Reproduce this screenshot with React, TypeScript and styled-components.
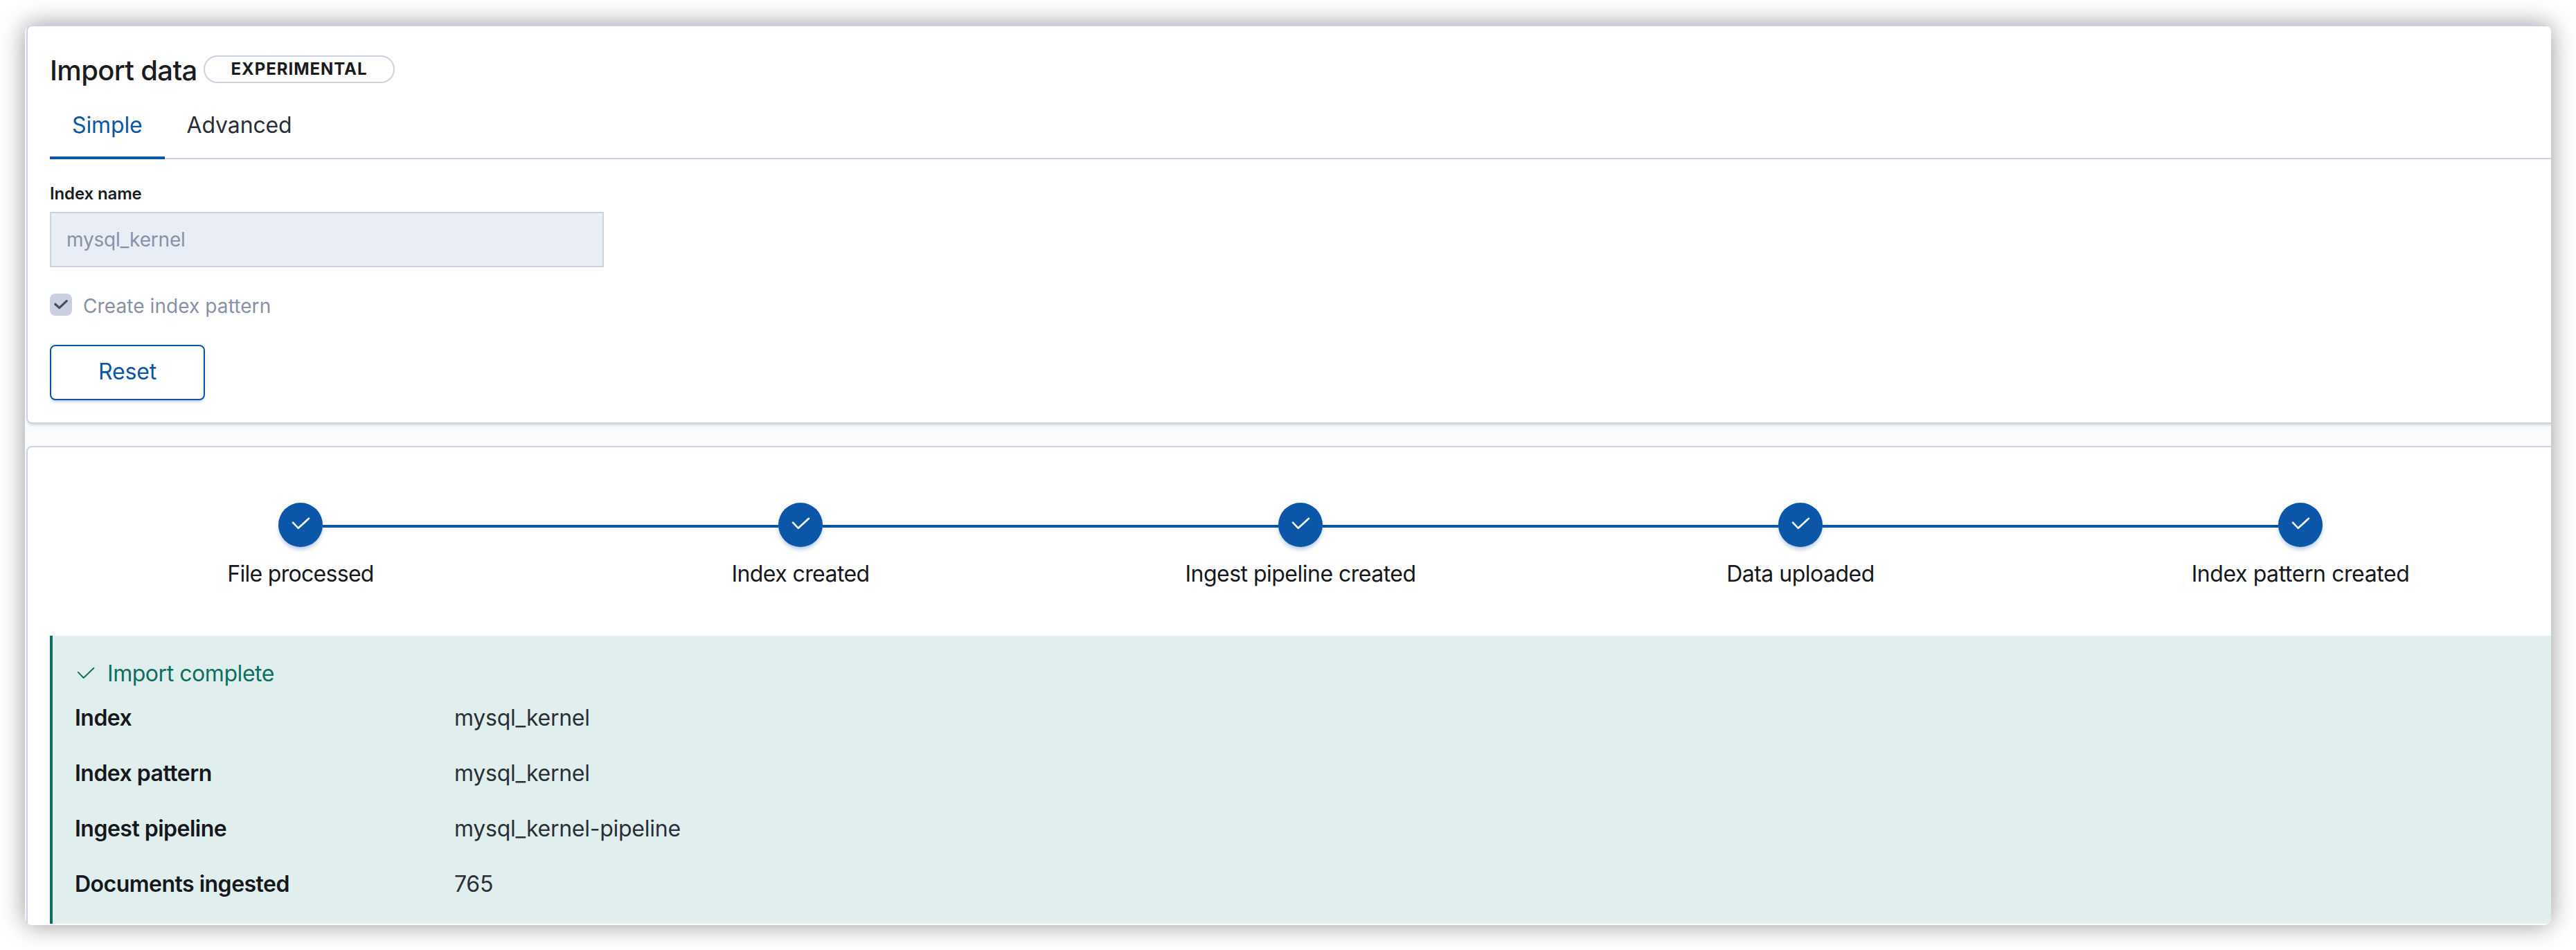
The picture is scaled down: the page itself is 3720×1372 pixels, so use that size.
import React from "react";
import styled, { createGlobalStyle } from "styled-components";

const GlobalStyle = createGlobalStyle`
  * { box-sizing: border-box; }
  body {
    margin: 0;
    background: #fff;
    font-family: Inter, "Liberation Sans", sans-serif;
    font-size: 32px;
    line-height: 48px;
    letter-spacing: -0.004em;
    color: #1a1c21;
  }
`;

const Stage = styled.div`
  height: 1372px;
  padding: 36px;
  overflow: hidden;
`;

const Shot = styled.main`
  width: 3648px;
  height: 1300px;
  padding-left: 2px;
  display: flex;
  flex-direction: column;
  gap: 32px;
  overflow: hidden;
  border-radius: 10px;
  background: #fafbfd;
  box-shadow: 0 0 36px rgba(0, 0, 0, 0.42);
`;

const Panel = styled.section<{ $height: number }>`
  flex: none;
  width: 3700px;
  height: ${(p) => p.$height}px;
  padding-left: 32px;
  border: 2px solid #cad3e2;
  border-radius: 8px;
  background: #fff;
  box-shadow: 0 4px 4px -2px rgba(152, 162, 179, 0.4);
`;

const Heading = styled.header`
  display: flex;
  align-items: flex-start;
  gap: 10px;
  padding-top: 34px;
  height: 96px;
`;

const Title = styled.h1`
  margin: 0;
  width: 212px;
  white-space: nowrap;
  font-size: 40px;
  font-weight: 500;
  line-height: 60px;
  letter-spacing: -0.016em;
`;

const Badge = styled.span`
  width: 276px;
  height: 40px;
  margin-top: 8px;
  border: 2px solid #cad3e2;
  border-radius: 20px;
  text-align: center;
  font-size: 24px;
  font-weight: 700;
  line-height: 36px;
  letter-spacing: 0.04em;
`;

const Tabs = styled.nav`
  display: flex;
  height: 96px;
  box-shadow: inset 0 -2px 0 #cad3e2;
`;

const Tab = styled.button<{ $active?: boolean }>`
  height: 96px;
  padding: 0 32px 3px;
  border: 0;
  background: none;
  box-shadow: ${(p) => (p.$active ? "inset 0 -4px 0 #0b56a8" : "none")};
  font: inherit;
  letter-spacing: inherit;
  color: ${(p) => (p.$active ? "#0b56a8" : "#2b2e38")};
`;

const Form = styled.div`
  display: flex;
  flex-direction: column;
  align-items: flex-start;
  padding-top: 32px;
`;

const Label = styled.label`
  height: 44px;
  font-size: 24px;
  font-weight: 600;
  line-height: 36px;
`;

const Field = styled.input`
  width: 800px;
  height: 80px;
  padding: 0 22px;
  border: 2px solid #ccd3e4;
  background: #e9edf5;
  font: inherit;
  font-size: 28px;
  letter-spacing: -0.007em;
  color: #8791a7;
`;

const CheckRow = styled.div`
  display: flex;
  gap: 16px;
  height: 112px;
  padding-top: 38px;
  font-size: 28px;
  line-height: 36px;
  letter-spacing: 0.003em;
  color: #8791a7;
`;

const CheckBox = styled.span`
  display: flex;
  width: 32px;
  height: 32px;
  border-radius: 8px;
  background: #c9d1e1;
`;

const ResetButton = styled.button`
  width: 224px;
  height: 80px;
  padding: 0 0 3px;
  border: 2px solid #0b56a8;
  border-radius: 8px;
  background: #fff;
  box-shadow: 0 4px 4px -2px rgba(54, 97, 126, 0.35);
  font: inherit;
  letter-spacing: inherit;
  color: #0b56a8;
`;

const Steps = styled.ol`
  display: flex;
  margin: 0;
  padding: 80px 0 0 1px;
  height: 272px;
  list-style: none;
`;

const Step = styled.li`
  width: 722px;
  display: flex;
  flex-direction: column;
  align-items: center;
  gap: 15px;
`;

const StepTrack = styled.div`
  display: flex;
  align-items: center;
  width: 100%;
`;

const StepLine = styled.span<{ $hidden: boolean }>`
  flex: 1;
  height: 4px;
  margin-top: 4px;
  background: ${(p) => (p.$hidden ? "transparent" : "#0b56a8")};
`;

const StepCircle = styled.span`
  display: flex;
  width: 64px;
  height: 64px;
  border-radius: 50%;
  background: #0b56a8;
  box-shadow: 0 4px 6px -1px rgba(11, 86, 168, 0.35);
`;

const StepName = styled.span<{ $tracking: number }>`
  letter-spacing: ${(p) => p.$tracking}em;
  color: #16181d;
`;

const Callout = styled.div`
  height: 416px;
  padding: 33px 0 0 32px;
  border-left: 4px solid #0d6e62;
  background: #e0efed;
`;

const CalloutTitle = styled.div`
  display: flex;
  align-items: center;
  gap: 18px;
  height: 44px;
  padding-left: 4px;
  letter-spacing: -0.014em;
  color: #0d6e62;
`;

const Facts = styled.dl`
  display: grid;
  grid-template-columns: 548px 1fr;
  grid-auto-rows: 80px;
  margin: 18px 0 0;
`;

const Term = styled.dt`
  font-weight: 600;
  letter-spacing: -0.016em;
  color: #16181d;
`;

const Value = styled.dd`
  margin: 0;
  letter-spacing: -0.008em;
  color: #2b2e38;
`;

const Glyph = styled.svg`
  flex: none;
  overflow: visible;
  fill: none;
  stroke-linecap: round;
  stroke-linejoin: round;
`;

type CheckProps = { width: number; height: number; stroke: string; d: string; weight: number };

const Check = ({ width, height, stroke, d, weight }: CheckProps) => (
  <Glyph width={width} height={height} viewBox={`0 0 ${width} ${height}`} stroke={stroke} strokeWidth={weight}>
    <path d={d} />
  </Glyph>
);

const steps = [
  { name: "File processed", tracking: -0.022 },
  { name: "Index created", tracking: -0.018 },
  { name: "Ingest pipeline created", tracking: -0.016 },
  { name: "Data uploaded", tracking: -0.016 },
  { name: "Index pattern created", tracking: -0.013 },
];

const facts = [
  ["Index", "mysql_kernel"],
  ["Index pattern", "mysql_kernel"],
  ["Ingest pipeline", "mysql_kernel-pipeline"],
  ["Documents ingested", "765"],
];

export default function App() {
  return (
    <Stage>
      <GlobalStyle />
      <Shot>
        <Panel $height={576}>
          <Heading>
            <Title>Import data</Title>
            <Badge>EXPERIMENTAL</Badge>
          </Heading>
          <Tabs>
            <Tab $active>Simple</Tab>
            <Tab>Advanced</Tab>
          </Tabs>
          <Form>
            <Label>Index name</Label>
            <Field disabled value="mysql_kernel" readOnly />
            <CheckRow>
              <CheckBox>
                <Check width={32} height={32} stroke="#474c59" weight={3.2} d="M7.8 15.2 L13.7 20.6 L24.3 10.6" />
              </CheckBox>
              <span>Create index pattern</span>
            </CheckRow>
            <ResetButton>Reset</ResetButton>
          </Form>
        </Panel>
        <Panel $height={720}>
          <Steps>
            {steps.map(({ name, tracking }, i) => (
              <Step key={name}>
                <StepTrack>
                  <StepLine $hidden={i === 0} />
                  <StepCircle>
                    <Check width={64} height={64} stroke="#fff" weight={2.6} d="M21 28.7 L28.8 36.8 L44 22.8" />
                  </StepCircle>
                  <StepLine $hidden={i === steps.length - 1} />
                </StepTrack>
                <StepName $tracking={tracking}>{name}</StepName>
              </Step>
            ))}
          </Steps>
          <Callout>
            <CalloutTitle>
              <Check width={25} height={18} stroke="#0d6e62" weight={1.9} d="M0.9 6.8 L8.7 15 L23.5 0.8" />
              <span>Import complete</span>
            </CalloutTitle>
            <Facts>
              {facts.map(([term, value]) => (
                <React.Fragment key={term}>
                  <Term>{term}</Term>
                  <Value>{value}</Value>
                </React.Fragment>
              ))}
            </Facts>
          </Callout>
        </Panel>
      </Shot>
    </Stage>
  );
}
